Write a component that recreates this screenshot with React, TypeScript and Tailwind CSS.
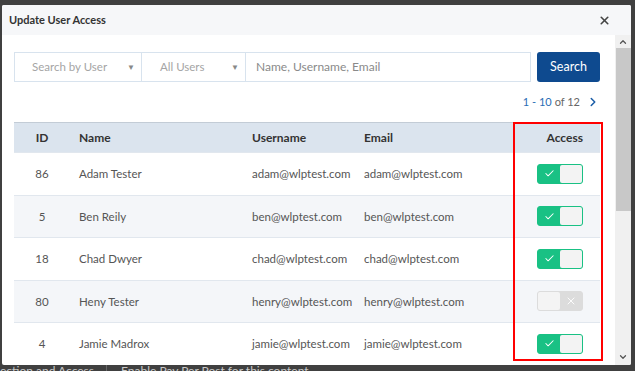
import { ChevronDown, ChevronUp, ChevronRight, X, Check } from 'lucide-react';

type User = { id: number; name: string; username: string; email: string; access: boolean };

const users: User[] = [
  { id: 86, name: 'Adam Tester', username: 'adam@wlptest.com', email: 'adam@wlptest.com', access: true },
  { id: 5, name: 'Ben Reily', username: 'ben@wlptest.com', email: 'ben@wlptest.com', access: true },
  { id: 18, name: 'Chad Dwyer', username: 'chad@wlptest.com', email: 'chad@wlptest.com', access: true },
  { id: 80, name: 'Heny Tester', username: 'henry@wlptest.com', email: 'henry@wlptest.com', access: false },
  { id: 4, name: 'Jamie Madrox', username: 'jamie@wlptest.com', email: 'jamie@wlptest.com', access: true },
];

function Toggle({ on }: { on: boolean }) {
  if (on) {
    return (
      <div className="flex h-[20px] w-[46px] rounded-[3px] border border-[#19c184] bg-[#19c184]">
        <div className="flex w-[22px] items-center justify-center text-white">
          <Check size={11} strokeWidth={2.2} />
        </div>
        <div className="flex-1 rounded-[2px] bg-[#f3f3f3]" />
      </div>
    );
  }
  return (
    <div className="flex h-[20px] w-[46px] rounded-[3px] border border-[#dcdcdc] bg-[#dcdcdc]">
      <div className="w-[22px] rounded-[2px] bg-[#f4f4f4]" />
      <div className="flex flex-1 items-center justify-center text-white">
        <X size={12} strokeWidth={1.8} />
      </div>
    </div>
  );
}

const cols = 'grid grid-cols-[56px_173px_112px_158px_1fr]';

export default function App() {
  return (
    <div
      className="relative h-[371px] w-[635px] overflow-hidden bg-[#404040]"
      style={{ fontFamily: 'Lato, "Open Sans", sans-serif' }}
    >
      {/* page behind the modal */}
      <div className="absolute left-0 top-[362px] flex text-[12px] text-[#c8c8c8]">
        <span className="w-[107px] border-r border-[#666]">ection and Access</span>
        <span className="pl-[14px]">Enable Pay Per Post for this content</span>
      </div>

      <div className="absolute left-[2px] top-[5px] flex h-[360px] w-[629px] flex-col overflow-hidden rounded-[2px] bg-white">
        {/* header */}
        <div className="flex h-[30px] shrink-0 items-center justify-between bg-[#f6f7f9] pl-[7px] pr-[20px]">
          <span className="text-[11px] font-bold text-[#333]">Update User Access</span>
          <X size={13} strokeWidth={3} className="text-[#444]" />
        </div>

        <div className="flex min-h-0 flex-1">
          {/* content */}
          <div className="min-w-0 flex-1 pl-[12px] pr-[15px] pt-[17px]">
            <div className="flex h-[30px] items-stretch">
              <div className="flex w-[128px] items-center justify-between border border-[#d8e3ee] pl-[17px] pr-[6px] text-[11.5px] text-[#a5a5a5]">
                <span>Search by User</span>
                <span className="text-[8px] text-[#888]">▼</span>
              </div>
              <div className="flex w-[104px] items-center justify-between border border-l-0 border-[#d8e3ee] pl-[18px] pr-[6px] text-[11.5px] text-[#a5a5a5]">
                <span>All Users</span>
                <span className="text-[8px] text-[#888]">▼</span>
              </div>
              <div className="flex flex-1 items-center border border-l-0 border-[#d8e3ee] pl-[10px] text-[12px] text-[#8a8a8a]">
                Name, Username, Email
              </div>
              <div className="ml-[6px] flex w-[63px] items-center justify-center rounded-[3px] bg-[#0e4a8f] text-[12.5px] text-white">
                Search
              </div>
            </div>

            <div className="mt-[12px] flex h-[16px] items-center justify-end text-[11px]">
              <span className="text-[#2a6db5]">1 - 10</span>
              <span className="ml-[3px] text-[#666]">of 12</span>
              <ChevronRight size={14} strokeWidth={2.6} className="ml-[6px] text-[#1d5fa8]" />
            </div>

            <div className="relative mt-[12px]">
              <div className={`${cols} h-[30px] items-center border-t border-[#c3ccd6] bg-[#dbe4ee] text-[12px] font-bold text-[#333]`}>
                <span className="text-center">ID</span>
                <span className="pl-[9px]">Name</span>
                <span className="pl-[9px]">Username</span>
                <span className="pl-[9px]">Email</span>
                <span className="pr-[17px] text-right">Access</span>
              </div>
              {users.map((u, i) => (
                <div
                  key={u.id}
                  className={`${cols} h-[42.5px] items-center border-t border-[#e1e7ee] text-[11.5px] text-[#555] ${i % 2 === 1 ? 'bg-[#f4f6f9]' : 'bg-white'}`}
                >
                  <span className="text-center">{u.id}</span>
                  <span className="pl-[9px]">{u.name}</span>
                  <span className="pl-[9px]">{u.username}</span>
                  <span className="pl-[9px]">{u.email}</span>
                  <div className="flex justify-end pr-[17px]">
                    <Toggle on={u.access} />
                  </div>
                </div>
              ))}
              {/* highlight annotation */}
              <div className="pointer-events-none absolute left-[499px] top-0 h-[239px] w-[90px] border-2 border-[#ff0000]" />
            </div>
          </div>

          {/* scrollbar */}
          <div className="flex w-[16px] shrink-0 flex-col items-center bg-[#f0f0f0]">
            <ChevronUp size={10} strokeWidth={3} className="mt-[2px] text-[#555]" />
            <div className="mt-[1px] h-[163px] w-[15px] bg-[#c8c8c8]" />
            <div className="flex-1" />
            <ChevronDown size={10} strokeWidth={3} className="mb-[3px] text-[#555]" />
          </div>
        </div>
      </div>
    </div>
  );
}
